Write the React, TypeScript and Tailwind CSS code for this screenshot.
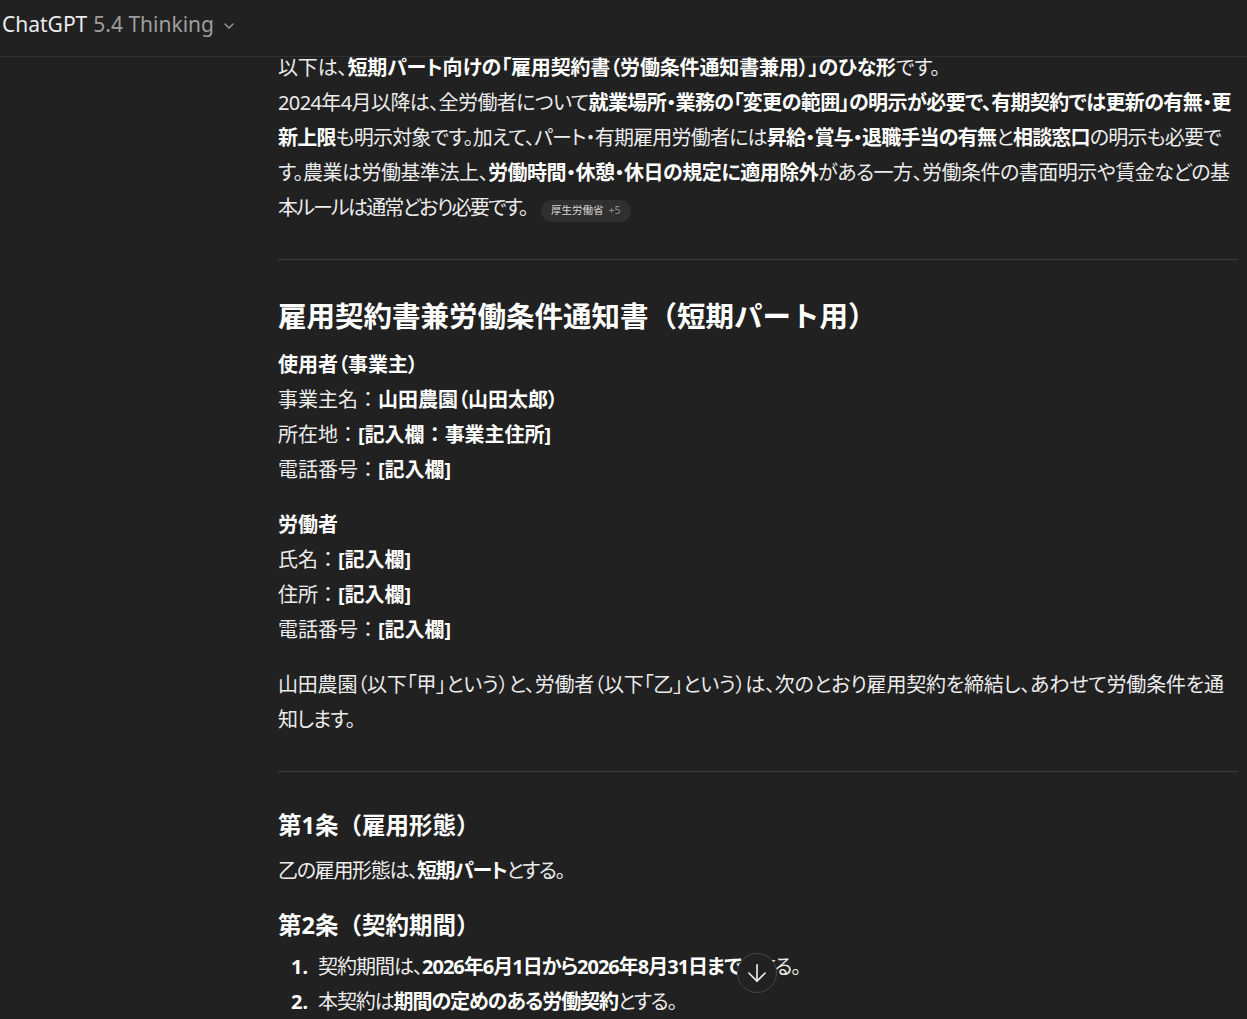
import { ArrowDown, ChevronDown } from "lucide-react"
import type { ReactNode } from "react"

// bold segment inside body text
function B({ children }: { children: ReactNode }) {
  return <strong className="font-bold text-white">{children}</strong>
}

// full-width colon, kept out of the proportional metrics
function Colon() {
  return <span className="[font-feature-settings:normal]">：</span>
}

function Rule() {
  return <hr className="my-[34px] border-0 border-t border-[#3d3d3d]" />
}

export default function App() {
  return (
    <div className="relative min-h-[1019px] overflow-hidden bg-[#212121] text-[#ececec] [font-family:'Noto_Sans','Noto_Sans_CJK_JP',sans-serif]">
      <header className="absolute inset-x-0 top-0 z-10 flex h-[57px] items-center border-b border-[#303030] bg-[#212121] pb-[6px] pl-[2px]">
        <span className="text-[21px] text-[#ececec]">ChatGPT</span>
        <span className="ml-[6px] text-[21px] text-[#9e9e9e]">5.4 Thinking</span>
        <ChevronDown className="ml-[7px] mt-[2px] h-[16px] w-[16px] text-[#9e9e9e]" strokeWidth={2} />
      </header>

      <main className="ml-[278px] w-[960px] pt-[50px] text-[20px] leading-[35px] [font-feature-settings:'palt']">
        <p className="whitespace-nowrap">
          <span className="block tracking-[-0.15px]">
            以下は、<B>短期パート向けの「雇用契約書（労働条件通知書兼用）」のひな形</B>です。
          </span>
          <span className="block tracking-[-0.6px]">
            2024年4月以降は、全労働者について<B>就業場所・業務の「変更の範囲」の明示が必要で、有期契約では更新の有無・更</B>
          </span>
          <span className="block tracking-[-0.8px]">
            <B>新上限</B>も明示対象です。加えて、パート・有期雇用労働者には<B>昇給・賞与・退職手当の有無</B>と<B>相談窓口</B>の明示も必要で
          </span>
          <span className="block tracking-[-0.5px]">
            す。農業は労働基準法上、<B>労働時間・休憩・休日の規定に適用除外</B>がある一方、労働条件の書面明示や賃金などの基
          </span>
          <span className="block">
            <span className="tracking-[-1.8px]">本ルールは通常どおり必要です。</span>
            <span className="ml-[14px] inline-flex h-[22px] translate-y-[1px] items-center gap-[5px] rounded-full bg-[#303030] px-[10px] align-middle text-[10.5px] leading-none">
              <span className="text-[#d8d8d8]">厚生労働省</span>
              <span className="text-[#8e8e8e]">+5</span>
            </span>
          </span>
        </p>

        <Rule />

        <h2 className="mt-[38px] text-[28.5px] font-bold leading-[36px] text-white [font-feature-settings:normal]">
          雇用契約書兼労働条件通知書（短期パート用）
        </h2>

        <p className="mt-[13px]">
          <B>使用者（事業主）</B>
          <br />
          事業主名<Colon /><B>山田農園（山田太郎）</B>
          <br />
          所在地<Colon /><B>[記入欄<Colon />事業主住所]</B>
          <br />
          電話番号<Colon /><B>[記入欄]</B>
        </p>

        <p className="mt-[20px]">
          <B>労働者</B>
          <br />
          氏名<Colon /><B>[記入欄]</B>
          <br />
          住所<Colon /><B>[記入欄]</B>
          <br />
          電話番号<Colon /><B>[記入欄]</B>
        </p>

        <p className="mt-[20px] whitespace-nowrap tracking-[-0.2px]">
          山田農園（以下「甲」という）と、労働者（以下「乙」という）は、次のとおり雇用契約を締結し、あわせて労働条件を通
          <br />
          <span className="tracking-[-1px]">知します。</span>
        </p>

        <Rule />

        <h3 className="mt-[37px] text-[23.5px] font-bold leading-[32px] text-white [font-feature-settings:normal]">
          第1条（雇用形態）
        </h3>
        <p className="mt-[12px] tracking-[-1.3px]">
          乙の雇用形態は、<B>短期パート</B>とする。
        </p>

        <h3 className="mt-[21px] text-[23.5px] font-bold leading-[32px] text-white [font-feature-settings:normal]">
          第2条（契約期間）
        </h3>
        <ol className="mt-[8px]">
          <li className="flex">
            <span className="w-[40px] pl-[13px] font-bold text-white">1.</span>
            <span className="tracking-[-1px]">
              契約期間は、<B>2026年6月1日から2026年8月31日まで</B>とする。
            </span>
          </li>
          <li className="flex">
            <span className="w-[40px] pl-[13px] font-bold text-white">2.</span>
            <span className="tracking-[-1.1px]">
              本契約は<B>期間の定めのある労働契約</B>とする。
            </span>
          </li>
        </ol>
      </main>

      <button className="absolute left-[737px] top-[953px] z-10 flex h-[40px] w-[40px] items-center justify-center rounded-full border border-[#474747] bg-[#212121]">
        <ArrowDown className="h-[28px] w-[28px] text-[#ececec]" strokeWidth={1.4} />
      </button>
    </div>
  )
}
